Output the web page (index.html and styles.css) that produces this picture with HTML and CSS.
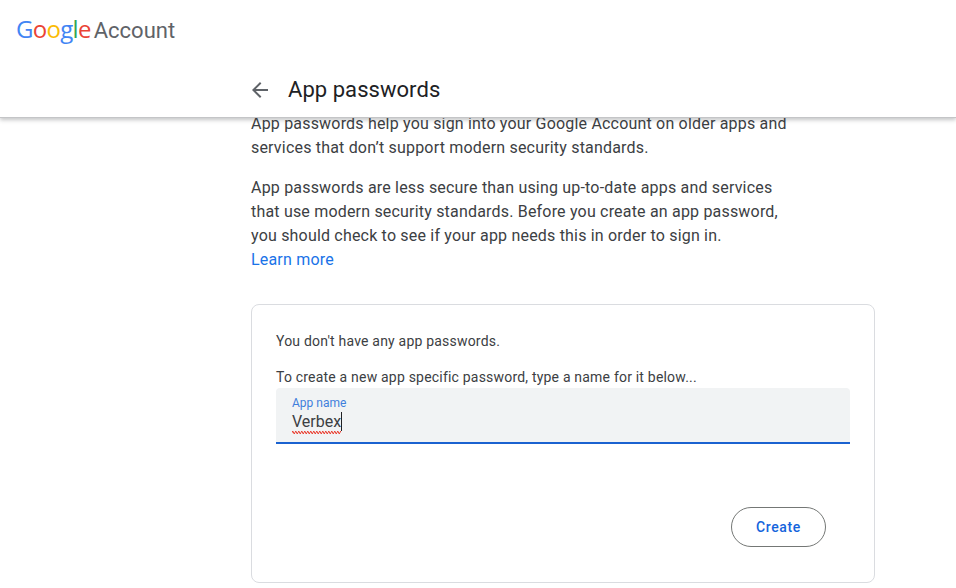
FILE: index.html
```html
<!DOCTYPE html>
<html lang="en">
<head>
<meta charset="utf-8">
<title>App passwords</title>
<link rel="stylesheet" href="styles.css">
</head>
<body>
<header class="topbar">
  <div class="brand">
    <span class="logo"><span class="blue">G</span><span class="red">o</span><span class="yellow">o</span><span class="blue">g</span><span class="green">l</span><span class="red">e</span></span>
    <span class="product">Account</span>
  </div>
  <div class="titlerow">
    <svg class="back" viewBox="0 0 24 24" width="24" height="24" aria-hidden="true"><path d="M20 11H7.8l5.6-5.6L12 4l-8 8 8 8 1.4-1.4L7.8 13H20z"/></svg>
    <h1>App passwords</h1>
  </div>
</header>
<main class="content">
  <p class="lead">App passwords help you sign into your Google Account on older apps and services that don’t support modern security standards.</p>
  <p class="lead">App passwords are less secure than using up-to-date apps and services that use modern security standards. Before you create an app password, you should check to see if your app needs this in order to sign in.<br><a href="#">Learn more</a></p>
  <section class="card">
    <p class="note first">You don't have any app passwords.</p>
    <p class="note">To create a new app specific password, type a name for it below...</p>
    <div class="field">
      <span class="label">App name</span>
      <span class="value"><span class="typed">Verbex</span><span class="caret"></span></span>
    </div>
    <div class="actions"><button class="create" type="button">Create</button></div>
  </section>
</main>
</body>
</html>
```
FILE: styles.css
```css
* { box-sizing: border-box; }
html, body { height: 100%; }
body {
  margin: 0;
  overflow: hidden;
  background: #fff;
  color: #3c4043;
  font-family: Roboto, "Noto Sans", sans-serif;
}
.topbar {
  position: relative;
  z-index: 1;
  height: 118px;
  background: #fff;
  border-bottom: 1px solid #c4c5c7;
  box-shadow: 0 2px 4px rgba(60, 64, 67, .3);
}
.brand {
  display: flex;
  align-items: baseline;
  gap: 3px;
  height: 60px;
  padding: 15px 0 0 16px;
  font-size: 22px;
  line-height: 28px;
}
.logo { font-family: "Open Sans", sans-serif; font-size: 24px; font-weight: 500; letter-spacing: -.7px; }
.blue { color: #4285f4; }
.red { color: #ea4335; }
.yellow { color: #fbbc05; }
.green { color: #34a853; }
.product { color: #5f6368; }
.titlerow {
  display: flex;
  align-items: center;
  gap: 16px;
  height: 60px;
  margin-left: 248px;
}
.back { fill: #5f6368; flex: none; }
h1 {
  margin: 0;
  font-size: 22px;
  font-weight: 400;
  line-height: 32px;
  letter-spacing: .05px;
  color: #202124;
}
.content {
  width: 624px;
  margin: -6px 0 0 251px;
}
.lead {
  max-width: 540px;
  margin: 0 0 16px;
  font-size: 16px;
  line-height: 24px;
  letter-spacing: .19px;
}
a { color: #1a73e8; text-decoration: none; }
.card {
  height: 279px;
  margin-top: 32px;
  padding: 24px;
  border: 1px solid #dadce0;
  border-radius: 8px;
}
.note {
  margin: 0;
  font-size: 14px;
  line-height: 24px;
  letter-spacing: .2px;
}
.first { margin-bottom: 12px; }
.field {
  display: flex;
  flex-direction: column;
  height: 56px;
  margin-top: -1px;
  padding: 8px 16px 0;
  background: #f1f3f4;
  border-bottom: 2px solid #1a62d0;
  border-radius: 4px 4px 0 0;
}
.label { font-size: 12px; line-height: 14px; color: #3f7fdc; }
.value { display: flex; font-size: 16px; line-height: 20px; margin-top: 2px; color: #3c4043; }
.typed {
  padding-bottom: 2px;
  background:
    linear-gradient(45deg, transparent 35%, #ea4335 35% 65%, transparent 65%) left bottom / 3px 3px repeat-x,
    linear-gradient(135deg, transparent 35%, #ea4335 35% 65%, transparent 65%) 1.5px bottom / 3px 3px repeat-x;
}
.caret { width: 1px; height: 19px; background: #202124; }
.actions { display: flex; justify-content: flex-end; margin-top: 63px; padding-right: 24px; }
.create {
  width: 95px;
  height: 40px;
  padding: 0;
  background: #fff;
  border: 1px solid #747775;
  border-radius: 20px;
  color: #1464dc;
  font-family: Roboto, sans-serif;
  font-size: 14px;
  font-weight: 500;
  letter-spacing: .6px;
}
```
